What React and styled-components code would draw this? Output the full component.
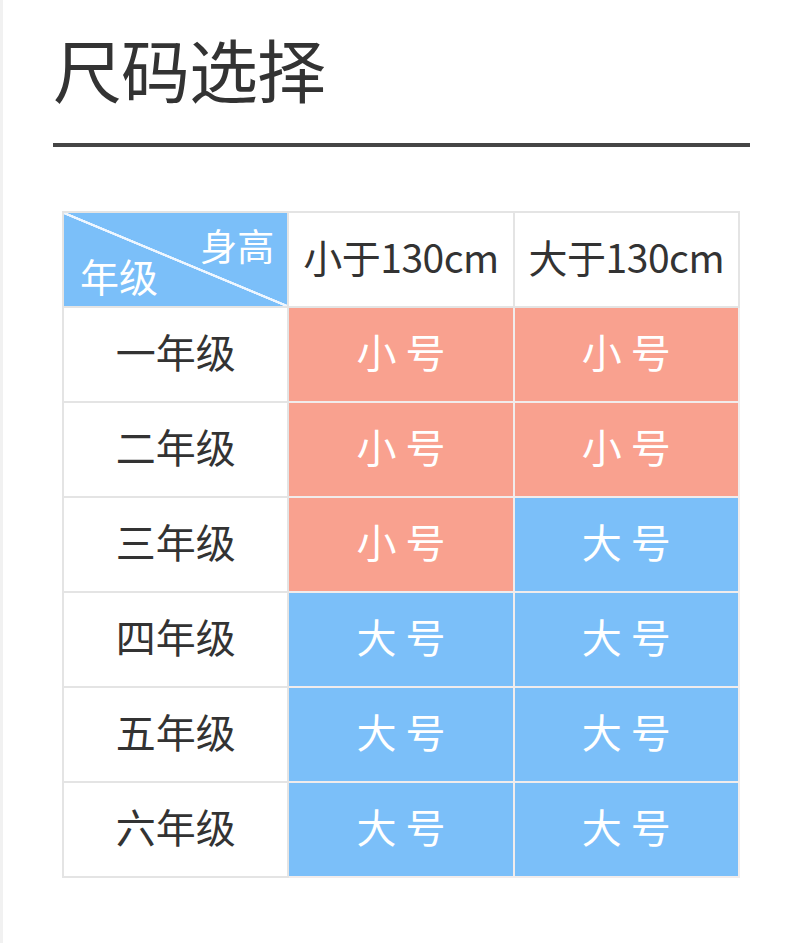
import React from "react";
import styled, { createGlobalStyle } from "styled-components";

const GlobalStyle = createGlobalStyle`
  html, body {
    margin: 0;
    padding: 0;
    background: #ffffff;
  }
  body {
    font-family: "Noto Sans CJK SC", "Noto Sans", sans-serif;
  }
`;

const Page = styled.div`
  width: 790px;
  height: 943px;
  box-sizing: border-box;
  border-left: 3px solid #f1f1f1;
  padding: 34px 0 0 50px;
  background: #fff;
`;

const Title = styled.h1`
  margin: 0;
  font-size: 69px;
  line-height: 69px;
  font-weight: 400;
  color: #333333;
  letter-spacing: -1px;
`;

const Rule = styled.div`
  width: 697px;
  height: 4px;
  margin-top: 40px;
  background: #454545;
`;

const Table = styled.table`
  margin: 64px 0 0 9px;
  width: 678px;
  border-collapse: collapse;
  table-layout: fixed;
`;

const colors = {
  small: "#f9a18f",
  big: "#7bbff9",
};

const Cell = styled.td`
  height: 85px;
  padding: 0 0 8px;
  border: 2px solid ${(p) => (p.$tone ? "#f1ecec" : "#e4e4e4")};
  background: ${(p) => (p.$tone ? colors[p.$tone] : "#fff")};
  color: ${(p) => (p.$tone ? "#ffffff" : "#333333")};
  font-size: 40px;
  font-weight: 400;
  text-align: center;
  vertical-align: middle;
  white-space: pre;
`;

const CornerCell = styled.td`
  position: relative;
  height: 93px;
  padding: 0;
  border: 2px solid #e4e4e4;
  background: linear-gradient(
      to top right,
      transparent calc(50% - 1.5px),
      #eef6ff calc(50% - 1px),
      #eef6ff calc(50% + 1px),
      transparent calc(50% + 1.5px)
    ),
    ${colors.big};
  color: #fff;
`;

const CornerLabel = styled.span`
  position: absolute;
  line-height: 1;
  ${(p) =>
    p.$top
      ? "top: 14px; right: 13px; font-size: 37px;"
      : "bottom: 11px; left: 16px; font-size: 39px;"}
`;

const HeadText = styled.span`
  font-size: 39px;
  letter-spacing: -0.5px;
`;

const rows = [
  ["一年级", "small", "small"],
  ["二年级", "small", "small"],
  ["三年级", "small", "big"],
  ["四年级", "big", "big"],
  ["五年级", "big", "big"],
  ["六年级", "big", "big"],
];

const label = { small: "小 号", big: "大 号" };

export default function App() {
  return (
    <Page>
      <GlobalStyle />
      <Title>尺码选择</Title>
      <Rule />
      <Table>
        <tbody>
          <tr>
            <CornerCell>
              <CornerLabel $top>身高</CornerLabel>
              <CornerLabel>年级</CornerLabel>
            </CornerCell>
            <Cell>
              <HeadText>小于130cm</HeadText>
            </Cell>
            <Cell>
              <HeadText>大于130cm</HeadText>
            </Cell>
          </tr>
          {rows.map(([grade, a, b]) => (
            <tr key={grade}>
              <Cell>{grade}</Cell>
              <Cell $tone={a}>{label[a]}</Cell>
              <Cell $tone={b}>{label[b]}</Cell>
            </tr>
          ))}
        </tbody>
      </Table>
    </Page>
  );
}
